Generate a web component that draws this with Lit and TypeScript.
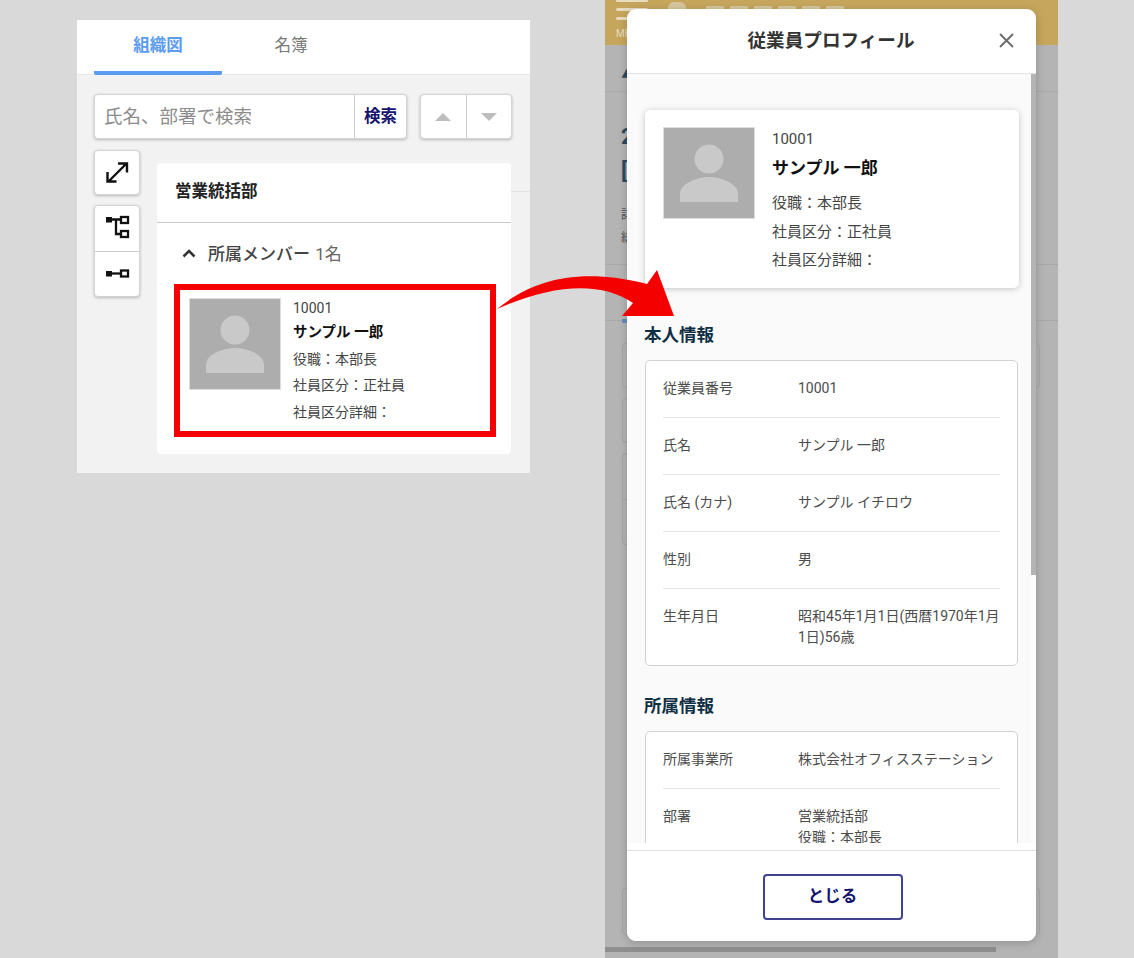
import { LitElement, html, css, svg } from 'lit';
import { customElement } from 'lit/decorators.js';

const avatar = html`
  <svg class="avatar" viewBox="0 0 92 92">
    <rect width="92" height="92" fill="#adadad" />
    <circle cx="46" cy="32" r="14.5" fill="#c9c9c9" />
    <path d="M17 75v-8c0-11 18-17 29-17s29 6 29 17v8z" fill="#c9c9c9" />
  </svg>
`;

const personRows = [
  ['従業員番号', ['10001']],
  ['氏名', ['サンプル 一郎']],
  ['氏名 (カナ)', ['サンプル イチロウ']],
  ['性別', ['男']],
  ['生年月日', ['昭和45年1月1日(西暦1970年1月1日)56歳']],
];

const orgRows = [
  ['所属事業所', ['株式会社オフィスステーション']],
  ['部署', ['営業統括部', '役職：本部長']],
];

const expandIcon = svg`
  <path d="M8 24L25 7M17 6.5h9v9M6.5 15v9.5h9" fill="none" stroke="#111" stroke-width="2.4" />
`;

const treeIcon = svg`
  <rect x="5" y="5" width="6" height="5.5" fill="#111" />
  <path d="M10 7.5h10M15 7.5V22h5" fill="none" stroke="#111" stroke-width="2.3" />
  <rect x="20" y="5" width="7" height="6" fill="#fff" stroke="#111" stroke-width="2.3" />
  <rect x="20" y="19" width="7" height="6" fill="#fff" stroke="#111" stroke-width="2.3" />
`;

const lineIcon = svg`
  <rect x="5" y="13" width="6" height="5.5" fill="#111" />
  <path d="M10 15.5h10" fill="none" stroke="#111" stroke-width="2.3" />
  <rect x="20" y="12.5" width="7" height="6" fill="#fff" stroke="#111" stroke-width="2.3" />
`;

@customElement('app-root')
class AppRoot extends LitElement {
  static styles = css`
    :host {
      display: block;
      height: 958px;
      background: #d9d9d9;
      font-family: Roboto, 'Noto Sans CJK JP', sans-serif;
      color: #444;
      position: relative;
      overflow: hidden;
    }
    .page {
      display: flex;
      height: 958px;
      padding-left: 77px;
      gap: 75px;
    }

    /* left panel */
    .panel {
      width: 453px;
      height: 453px;
      margin-top: 20px;
      background: #f2f2f2;
      position: relative;
    }
    .tabs {
      display: flex;
      height: 55px;
      padding-left: 17px;
      background: #fff;
      border-bottom: 1px solid #e6e6e6;
      box-sizing: border-box;
    }
    .tab {
      width: 128px;
      text-align: center;
      font-size: 16.5px;
      line-height: 52px;
      color: #777;
      height: 55px;
      box-sizing: border-box;
    }
    .tab + .tab {
      width: 138px;
    }
    .tab.active {
      color: #5b9bf0;
      font-weight: 700;
      border-bottom: 4px solid #5b9bf0;
      border-radius: 2px;
    }
    .search-row {
      display: flex;
      gap: 13px;
      padding: 19px 0 0 17px;
    }
    .search,
    .arrows,
    .tool {
      display: flex;
      height: 45px;
      background: #fff;
      border: 1px solid #d4d4d4;
      border-radius: 4px;
      box-shadow: 0 1px 3px rgba(0, 0, 0, 0.25);
      box-sizing: border-box;
    }
    .search {
      width: 313px;
    }
    .search-input {
      flex: 1;
      padding-left: 9px;
      font-size: 18.5px;
      line-height: 45px;
      color: #8c8c8c;
    }
    .search-btn {
      width: 51px;
      border-left: 1px solid #ccc;
      text-align: center;
      font-size: 16.5px;
      font-weight: 700;
      line-height: 44px;
      color: #14146e;
    }
    .arrows {
      width: 92px;
    }
    .arrow {
      flex: 1;
      display: flex;
      align-items: center;
      justify-content: center;
    }
    .arrow + .arrow {
      border-left: 1px solid #ccc;
    }
    .tri {
      width: 0;
      height: 0;
      border-left: 8px solid transparent;
      border-right: 8px solid transparent;
    }
    .tri.up {
      border-bottom: 8px solid #bdbdbd;
    }
    .tri.down {
      border-top: 8px solid #bdbdbd;
    }
    .work {
      display: flex;
      gap: 17px;
      padding: 11px 0 0 17px;
      position: relative;
    }
    .work::after {
      content: '';
      position: absolute;
      left: 434px;
      right: 0;
      top: 52px;
      height: 1px;
      background: #e2e2e2;
    }
    .tools {
      display: flex;
      flex-direction: column;
      gap: 10px;
      width: 46px;
    }
    .tool {
      width: 46px;
      align-items: center;
      justify-content: center;
    }
    .tool-group {
      height: 92px;
      flex-direction: column;
    }
    .tool-group > div {
      flex: 1;
      width: 100%;
      display: flex;
      align-items: center;
      justify-content: center;
    }
    .tool-group > div + div {
      border-top: 1px solid #ccc;
    }
    .tool svg {
      width: 32px;
      height: 32px;
    }
    .dept {
      width: 354px;
      height: 291px;
      margin-top: 13px;
      background: #fff;
      border-radius: 4px;
      box-sizing: border-box;
    }
    .dept-title {
      height: 60px;
      padding-left: 18px;
      font-size: 16.5px;
      font-weight: 700;
      line-height: 58px;
      color: #222;
      border-bottom: 1px solid #c8c8c8;
      box-sizing: border-box;
    }
    .members {
      display: flex;
      align-items: center;
      gap: 12px;
      height: 61px;
      padding: 0 0 2px 25px;
      font-size: 17px;
      color: #666;
      box-sizing: border-box;
    }
    .members b {
      font-weight: 500;
      color: #444;
      margin-right: 1px;
    }
    .members svg {
      width: 14px;
      height: 10px;
    }
    .member {
      display: flex;
      gap: 12px;
      width: 322px;
      height: 153px;
      margin-left: 17px;
      padding: 8px 9px;
      border: 6px solid #f40000;
      box-sizing: border-box;
    }
    .avatar {
      display: block;
      flex: none;
      width: 92px;
      height: 92px;
      outline: 1px solid #ddd;
      outline-offset: -1px;
    }
    .member-info {
      font-size: 14px;
      line-height: 26.5px;
      margin-top: -3px;
    }
    .member-info div {
      white-space: nowrap;
    }
    .member-info .name {
      font-size: 14.5px;
      font-weight: 700;
      color: #111;
      line-height: 24px;
      margin: -1px 0 1px;
    }

    /* dimmed screen behind the modal */
    .screen {
      position: relative;
      width: 453px;
      height: 958px;
      background: #b4b4b4;
      overflow: hidden;
    }
    .topbar {
      display: flex;
      gap: 20px;
      height: 45px;
      padding-left: 11px;
      background: #c6a65c;
      box-sizing: border-box;
    }
    .burger {
      width: 32px;
      display: flex;
      flex-direction: column;
      gap: 6px;
    }
    .burger i {
      display: block;
      height: 3px;
      background: #e8dcc0;
      border-radius: 2px;
    }
    .burger i:first-child {
      margin-top: -1px;
    }
    .menu-label {
      font-size: 10px;
      color: #e8dcc0;
      margin-top: 2px;
    }
    .brand {
      display: flex;
      gap: 6px;
      padding-top: 6px;
    }
    .brand i {
      display: block;
      width: 18px;
      height: 3px;
      background: #d6c69c;
    }
    .brand i:first-child {
      margin-right: 14px;
      height: 7px;
      margin-top: -4px;
      background: #d6c69c;
      border-radius: 6px 6px 0 0;
    }
    .crumb {
      height: 47px;
      padding: 12px 0 0 16px;
      border-bottom: 1px solid #a8a8a8;
      box-sizing: border-box;
      font-size: 18px;
      color: #2d4a60;
    }
    .summary {
      height: 173px;
      padding: 28px 0 0 16px;
      border-bottom: 1px solid #a8a8a8;
      box-sizing: border-box;
      color: #2d4a60;
      font-size: 22px;
      line-height: 34px;
      font-weight: 700;
    }
    .summary p {
      margin: 16px 0 0;
      font-size: 12px;
      font-weight: 400;
      line-height: 23px;
      color: #555;
    }
    .tabline {
      height: 56px;
      border-bottom: 1px solid #a8a8a8;
      box-sizing: border-box;
      position: relative;
    }
    .tabline::after {
      content: '';
      position: absolute;
      left: 17px;
      bottom: -3px;
      width: 6px;
      height: 4px;
      background: #6b8cc0;
    }
    .ghosts {
      display: flex;
      flex-direction: column;
      gap: 10px;
      padding: 22px 18px 0 17px;
    }
    .ghost {
      height: 45px;
      border: 1px solid #a6a6a6;
      border-radius: 4px;
      box-sizing: border-box;
    }
    .ghost.narrow {
      width: 300px;
    }
    .ghost.tall {
      height: 92px;
      position: relative;
    }
    .ghost.tall::after {
      content: '';
      position: absolute;
      left: 0;
      right: 0;
      top: 45px;
      height: 1px;
      background: #a6a6a6;
    }
    .ghost.foot {
      margin-top: 333px;
      height: 47px;
    }
    .hscroll {
      position: absolute;
      left: 0;
      bottom: 6px;
      width: 391px;
      height: 5px;
      background: #8f8f8f;
    }

    /* modal */
    .modal {
      position: absolute;
      left: 22px;
      top: 9px;
      width: 409px;
      height: 932px;
      display: flex;
      flex-direction: column;
      background: #fff;
      border-radius: 9px;
      overflow: hidden;
      box-shadow: 0 2px 10px rgba(0, 0, 0, 0.2);
    }
    .modal-head {
      flex: none;
      display: flex;
      align-items: center;
      justify-content: center;
      position: relative;
      height: 65px;
      padding-bottom: 5px;
      padding-right: 1px;
      border-bottom: 1px solid #e4e4e4;
      box-sizing: border-box;
      font-size: 18.6px;
      font-weight: 700;
      color: #333;
    }
    .close {
      position: absolute;
      right: 22px;
      top: 24px;
      width: 15px;
      height: 15px;
    }
    .modal-body {
      flex: none;
      height: 769px;
      display: flex;
    }
    .modal-scroll {
      flex: 1;
      height: 100%;
      overflow: hidden;
      background: #fafafa;
      padding: 36px 12px 0 18px;
      box-sizing: border-box;
    }
    .scrollbar {
      flex: none;
      width: 5px;
      background: #fcfcfc;
    }
    .scrollbar i {
      display: block;
      height: 501px;
      background: #b4b4b4;
    }
    .profile {
      display: flex;
      gap: 17px;
      height: 178px;
      padding: 17px 18px;
      background: #fff;
      border-radius: 5px;
      box-shadow: 0 1px 6px rgba(0, 0, 0, 0.22);
      box-sizing: border-box;
    }
    .profile-info {
      font-size: 15px;
      line-height: 28.5px;
      margin-top: -2px;
    }
    .profile-info .name {
      font-size: 17px;
      font-weight: 700;
      color: #111;
      line-height: 29.5px;
      margin-bottom: 6px;
    }
    h2 {
      margin: 35px 0 12px -1px;
      font-size: 17.5px;
      line-height: 25px;
      font-weight: 700;
      color: #0f2f45;
    }
    .box + h2 {
      margin-top: 28px;
    }
    .box {
      margin-right: 1px;
      padding: 0 17px;
      background: #fff;
      border: 1px solid #d2d2d2;
      border-radius: 5px;
    }
    .row {
      display: flex;
      padding: 17px 0 18px;
      font-size: 14px;
      line-height: 21px;
      color: #4c4c4c;
    }
    .row:last-child {
      padding-bottom: 17px;
    }
    .row + .row {
      border-top: 1px solid #e4e4e4;
    }
    .row-label {
      flex: none;
      width: 135px;
    }
    .modal-foot {
      flex: 1;
      display: flex;
      align-items: flex-start;
      justify-content: center;
      padding: 23px 0 0 2px;
      background: #fff;
      position: relative;
      box-sizing: border-box;
    }
    .modal-foot::before {
      content: '';
      position: absolute;
      left: 0;
      right: 0;
      top: 7px;
      height: 1px;
      background: #e0e0e0;
    }
    .close-btn {
      width: 140px;
      height: 46px;
      margin-top: 8px;
      border: 2px solid #3f4391;
      border-radius: 4px;
      text-align: center;
      font-size: 16.5px;
      font-weight: 700;
      line-height: 42px;
      color: #14146e;
      box-sizing: border-box;
    }
    .callout {
      position: absolute;
      left: 490px;
      top: 260px;
      width: 200px;
      height: 70px;
      overflow: visible;
    }
  `;

  private renderRows(rows: any[]) {
    return rows.map(
      ([label, values]) => html`
        <div class="row">
          <div class="row-label">${label}</div>
          <div>${values.map((v: string) => html`<div>${v}</div>`)}</div>
        </div>
      `
    );
  }

  private renderPanel() {
    return html`
      <section class="panel">
        <div class="tabs">
          <div class="tab active">組織図</div>
          <div class="tab">名簿</div>
        </div>
        <div class="search-row">
          <div class="search">
            <div class="search-input">氏名、部署で検索</div>
            <div class="search-btn">検索</div>
          </div>
          <div class="arrows">
            <div class="arrow"><span class="tri up"></span></div>
            <div class="arrow"><span class="tri down"></span></div>
          </div>
        </div>
        <div class="work">
          <div class="tools">
            <div class="tool"><svg viewBox="0 0 32 32">${expandIcon}</svg></div>
            <div class="tool tool-group">
              <div><svg viewBox="0 0 32 32">${treeIcon}</svg></div>
              <div><svg viewBox="0 0 32 32">${lineIcon}</svg></div>
            </div>
          </div>
          <div class="dept">
            <div class="dept-title">営業統括部</div>
            <div class="members">
              <svg viewBox="0 0 14 10"><path d="M1.5 8.5L7 3l5.5 5.5" fill="none" stroke="#333" stroke-width="2.5" /></svg>
              <span><b>所属メンバー</b> 1名</span>
            </div>
            <div class="member">
              ${avatar}
              <div class="member-info">
                <div>10001</div>
                <div class="name">サンプル 一郎</div>
                <div>役職：本部長</div>
                <div>社員区分：正社員</div>
                <div>社員区分詳細：</div>
              </div>
            </div>
          </div>
        </div>
      </section>
    `;
  }

  private renderModal() {
    return html`
      <div class="modal">
        <div class="modal-head">
          従業員プロフィール
          <svg class="close" viewBox="0 0 15 15"><path d="M1 1l13 13M14 1L1 14" stroke="#6b6b6b" stroke-width="1.9" /></svg>
        </div>
        <div class="modal-body">
          <div class="modal-scroll">
            <div class="profile">
              ${avatar}
              <div class="profile-info">
                <div>10001</div>
                <div class="name">サンプル 一郎</div>
                <div>役職：本部長</div>
                <div>社員区分：正社員</div>
                <div>社員区分詳細：</div>
              </div>
            </div>
            <h2>本人情報</h2>
            <div class="box">${this.renderRows(personRows)}</div>
            <h2>所属情報</h2>
            <div class="box">${this.renderRows(orgRows)}</div>
          </div>
          <div class="scrollbar"><i></i></div>
        </div>
        <div class="modal-foot"><div class="close-btn">とじる</div></div>
      </div>
    `;
  }

  render() {
    return html`
      <div class="page">
        ${this.renderPanel()}
        <section class="screen">
          <div class="topbar">
            <div class="burger"><i></i><i></i><i></i><span class="menu-label">MENU</span></div>
            <div class="brand"><i></i><i></i><i></i><i></i><i></i><i></i><i></i></div>
          </div>
          <div class="crumb">▲</div>
          <div class="summary">2<br />[<p>詳<br />総</p></div>
          <div class="tabline"></div>
          <div class="ghosts">
            <div class="ghost"></div>
            <div class="ghost narrow"></div>
            <div class="ghost narrow tall"></div>
            <div class="ghost foot"></div>
          </div>
          <div class="hscroll"></div>
          ${this.renderModal()}
        </section>
      </div>
      <svg class="callout" viewBox="0 0 200 70">
        <path d="M7 49C40 22 85 6 157 24L167 10L184 56L132 56L143 43C110 20 60 25 7 49Z" fill="#f40000" />
      </svg>
    `;
  }
}
